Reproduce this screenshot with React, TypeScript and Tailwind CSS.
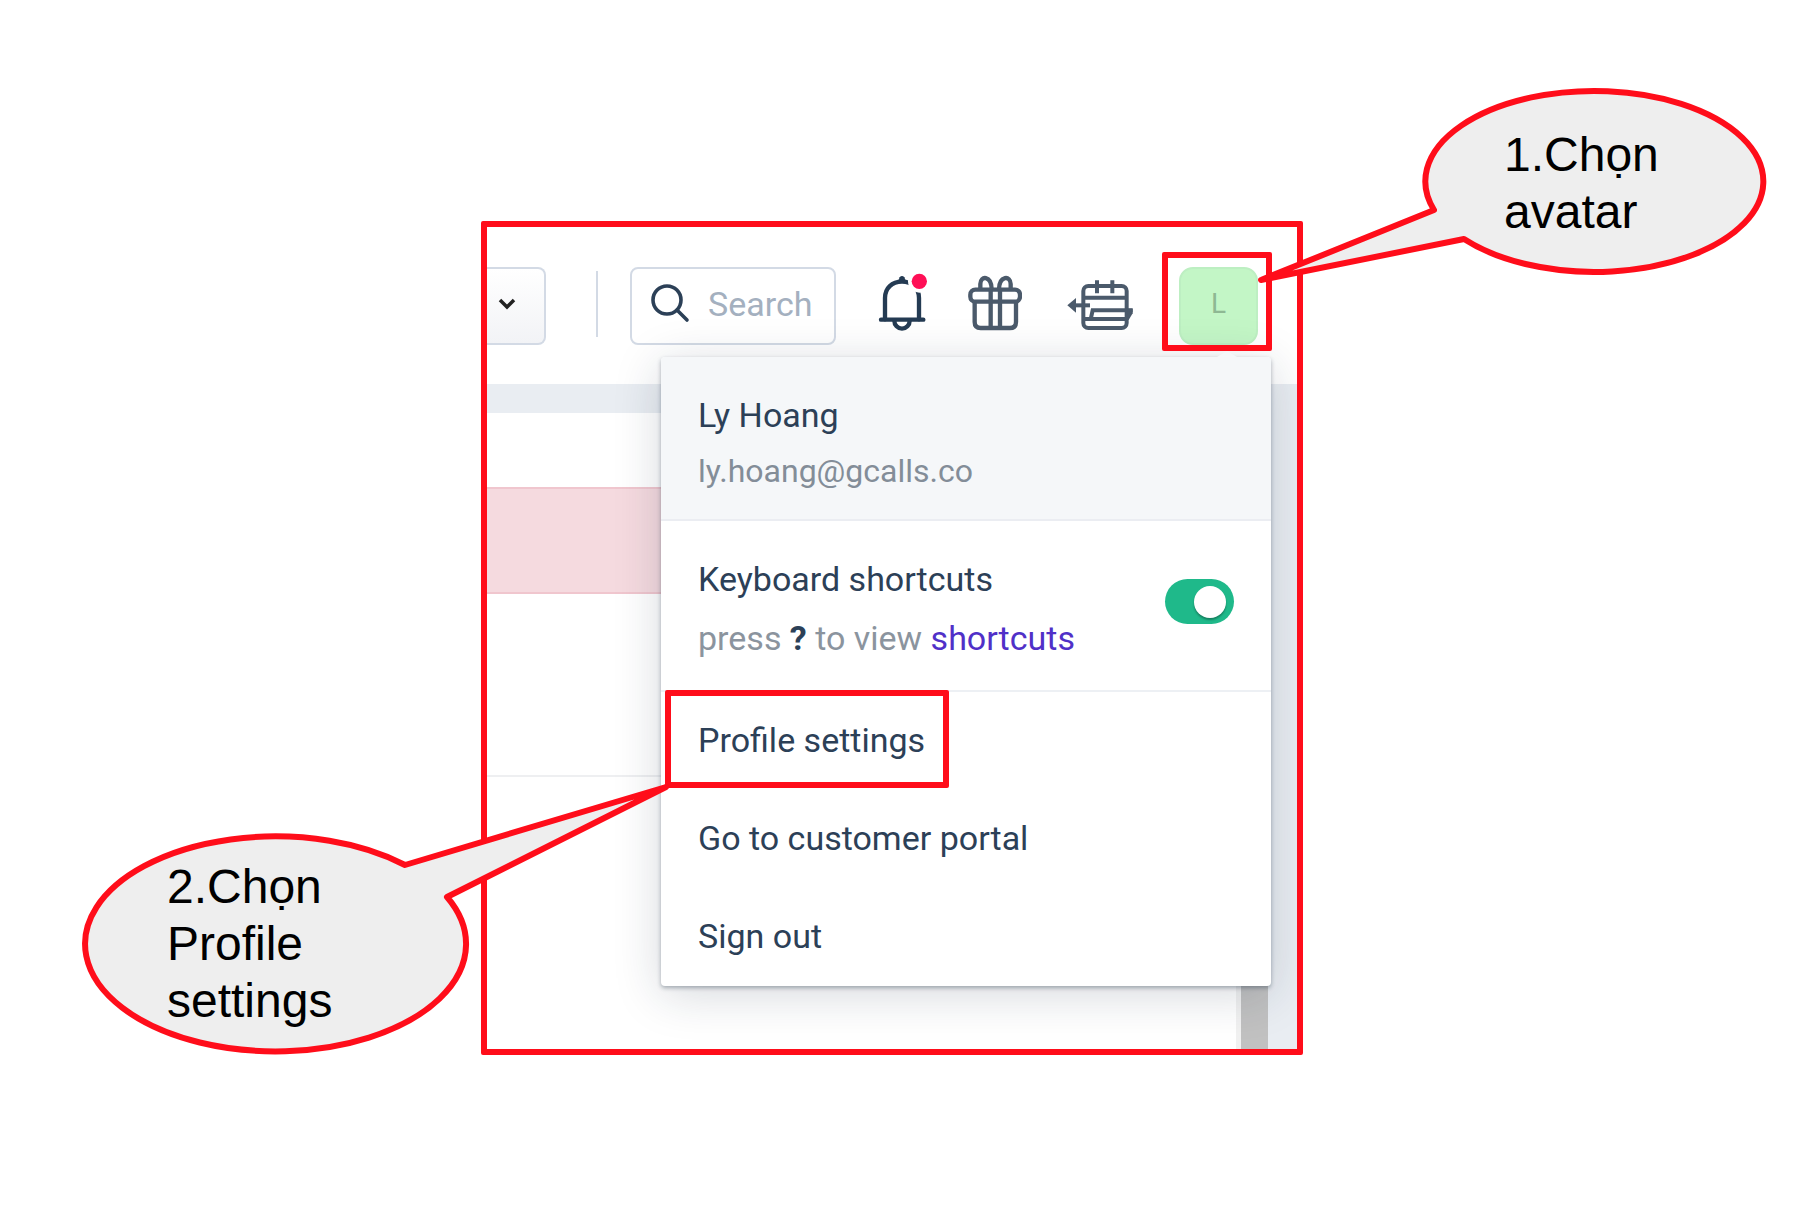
import type { ReactNode } from "react";
import clsx from "clsx";

const menuItems = [
	{ label: "Profile settings", highlighted: true },
	{ label: "Go to customer portal", highlighted: false },
	{ label: "Sign out", highlighted: false }
];

export default function App() {
	return (
		<main className="grid min-h-screen grid-cols-[481fr_822fr_517fr] items-start overflow-hidden bg-white pt-[221px] font-[Roboto,sans-serif]">
			<div className="relative col-start-2">
				<div className="relative overflow-hidden rounded-xs border-6 border-[#ff0d1a] bg-white">
					<Header />
					<Background />
					<ProfileMenu />
				</div>
				<Highlight className="top-[31px] right-[31px] h-[99px] w-[110px]" />
				<AvatarCallout />
				<SettingsCallout />
			</div>
		</main>
	);
}

function Header() {
	return (
		<header className="flex h-[157px] pt-10 pr-[39px] pb-[39px]">
			<button
				type="button"
				aria-label="Open list"
				className="flex min-w-0 flex-1 items-center justify-end rounded-r-lg border-2 border-l-0 border-[#d3dae5] bg-linear-to-b from-white to-[#f2f3f6] pr-7 pb-1"
			>
				<svg width="18" height="12" viewBox="0 0 18 12" fill="none">
					<path d="M2 2l7 7 7-7" stroke="#222" strokeWidth="3.5" />
				</svg>
			</button>
			<div className="mt-1 mr-8 ml-[50px] h-[66px] w-0.5 bg-[#d3dae5]" />
			<div className="flex w-[206px] shrink-0 items-center rounded-lg border-2 border-[#d3dae5] pb-1 pl-[18px]">
				<svg
					width="40"
					height="40"
					viewBox="0 0 40 40"
					fill="none"
					stroke="#2c4057"
					strokeWidth="3.6"
					className="shrink-0"
				>
					<circle cx="17" cy="16" r="14" />
					<path d="M27 26l10 10" strokeLinecap="round" />
				</svg>
				<input
					type="text"
					aria-label="Search"
					placeholder="Search"
					className="ml-[18px] w-full min-w-0 text-[34px] leading-10 outline-none placeholder:text-[#a4b0bf]"
				/>
			</div>
			<button type="button" aria-label="Notifications" className="ml-[43px]">
				<BellIcon />
			</button>
			<button type="button" aria-label="What's new" className="ml-[43px]">
				<GiftIcon />
			</button>
			<button type="button" aria-label="Switch" className="ml-[45px]">
				<CalendarIcon />
			</button>
			<button
				type="button"
				className="ml-[46px] w-[79px] shrink-0 rounded-[14px] border-2 border-[#bdefc2] bg-[#c3f6c6] pb-1 text-[28px] text-[#8eb893]"
			>
				L
			</button>
		</header>
	);
}

function Background() {
	return (
		<div className="flex bg-[#e9edf2] pt-[29px]">
			<div className="flex-1 bg-white pt-[74px]">
				<div className="h-[107px] border-y-2 border-[#f0c6ce] bg-[#f5dadf]" />
				<div className="h-[183px] border-b-2 border-[#eeeff1]" />
				<div className="h-[272px]" />
			</div>
			<div className="w-8 border-l-5 border-[#f1f1f1] bg-[#c1c1c1]" />
			<div className="w-[29px]" />
		</div>
	);
}

function ProfileMenu() {
	return (
		<div className="absolute top-[130px] right-[26px] w-[610px] rounded-sm bg-white text-[34px] leading-10 text-[#2c4057] shadow-[0_2px_4px_rgba(24,40,60,0.35),0_8px_48px_rgba(24,40,60,0.18)]">
			<div className="absolute -top-1.5 right-[34px] border-x-10 border-b-6 border-x-transparent border-b-[#f5f7f9]" />
			<div className="rounded-t-sm border-b-2 border-[#ebedf2] bg-[#f5f7f9] px-[37px] pt-[38px] pb-7">
				<p>Ly Hoang</p>
				<p className="mt-4 text-[32px] text-[#838d98]">
					ly.hoang@gcalls.co
				</p>
			</div>
			<div className="flex items-start justify-between border-b-2 border-[#edf0f4] px-[37px] pt-[38px] pb-8">
				<div>
					<label htmlFor="shortcuts">Keyboard shortcuts</label>
					<p className="mt-[19px] text-[#8b949e]">
						press <b className="text-[#2c4057]">?</b> to view{" "}
						<a href="#shortcuts" className="text-[#5030c8]">
							shortcuts
						</a>
					</p>
				</div>
				<input
					id="shortcuts"
					type="checkbox"
					defaultChecked
					className="mt-5 flex h-[45px] w-[69px] appearance-none items-center justify-end rounded-full bg-[#1fb98a] px-2 before:size-8 before:rounded-full before:bg-white before:shadow-[0_2px_2px_rgba(0,0,0,0.3)]"
				/>
			</div>
			<nav>
				{menuItems.map(item => (
					<a
						key={item.label}
						href="#"
						className="relative block pt-7 pb-[30px] pl-[37px]"
					>
						{item.label}
						{item.highlighted ? (
							<Highlight className="-top-0.5 left-1 h-[98px] w-[284px]" />
						) : null}
					</a>
				))}
			</nav>
		</div>
	);
}

function Highlight({ className }: { className: string }) {
	return (
		<span
			className={clsx(
				"pointer-events-none absolute rounded-xs border-6 border-[#ff0d1a]",
				className
			)}
		/>
	);
}

function CalloutShape({ viewBox, d }: { viewBox: string; d: string }) {
	return (
		<svg
			viewBox={viewBox}
			className="absolute inset-0 size-full"
			fill="#eee"
			stroke="#ff0d1a"
			strokeWidth="6"
			strokeLinejoin="round"
		>
			<path d={d} />
		</svg>
	);
}

function CalloutText({ children }: { children: ReactNode }) {
	return (
		<p className="relative font-['Liberation_Sans',Arial,sans-serif] text-[48px] leading-[57px] text-black">
			{children}
		</p>
	);
}

function AvatarCallout() {
	return (
		<div className="absolute -top-[135px] -right-[465px] h-[200px] w-[512px] pt-10 pl-[248px]">
			<CalloutShape
				viewBox="0 0 512 200"
				d="M5 194L178 124A169 90.5 0 1 1 208 153Z"
			/>
			<CalloutText>
				1.Chọn
				<br />
				avatar
			</CalloutText>
		</div>
	);
}

function SettingsCallout() {
	return (
		<div className="absolute top-[562px] right-[631px] h-[273px] w-[595px] pt-[75px] pl-[90px]">
			<CalloutShape
				viewBox="0 0 595 273"
				d="M589 4L328 82A190.5 107.5 0 1 0 370 114Z"
			/>
			<CalloutText>
				2.Chọn
				<br />
				Profile
				<br />
				settings
			</CalloutText>
		</div>
	);
}

function BellIcon() {
	return (
		<svg width="46" height="78" viewBox="117 81 138 234" className="overflow-visible">
			<g fill="none" stroke="#243b53" strokeWidth="13" strokeLinecap="round">
				<path d="M135 238V174C135 144 156 125 186 125C216 125 237 144 237 174V238" />
				<path d="M123 239H250" />
				<path d="M163 242A23 24 0 0 0 209 242" />
			</g>
			<path d="M174 124L179 112Q186 104 193 112L200 128Z" fill="#243b53" />
			<circle cx="238" cy="124" r="34" fill="#fff" />
			<circle cx="238" cy="124" r="23" fill="#ff0f56" />
		</svg>
	);
}

function GiftIcon() {
	return (
		<svg
			width="54"
			height="78"
			viewBox="384 81 162 234"
			fill="none"
			stroke="#4b5a6b"
			strokeWidth="13"
		>
			<rect x="391" y="149" width="149" height="36" rx="15" />
			<path d="M404 186V246Q404 264 422 264H510Q528 264 528 246V186" />
			<path d="M452 149V264M480 149V264" />
			<path d="M455 148C454 106 421 106 421 132V149" />
			<path d="M477 148C478 106 512 106 512 132V149" />
		</svg>
	);
}

function CalendarIcon() {
	return (
		<svg
			width="66"
			height="78"
			viewBox="681 81 198 234"
			fill="none"
			stroke="#4b5a6b"
			strokeWidth="12"
		>
			<rect x="730" y="138" width="130" height="126" rx="15" />
			<path d="M729 173H860M771 121V160M817 121V160" />
			<path d="M700 196H750" />
			<path d="M682 196L708 174V218Z" fill="#4b5a6b" stroke="none" />
			<path d="M752 238L758 211H878M729 237H862" />
			<path d="M863 206H878V220L866 240H861Z" fill="#4b5a6b" stroke="none" />
		</svg>
	);
}
